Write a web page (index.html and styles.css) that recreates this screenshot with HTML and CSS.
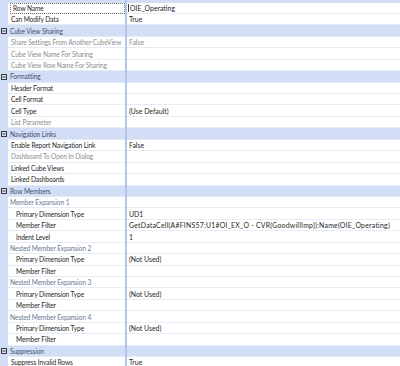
FILE: index.html
```html
<!DOCTYPE html>
<html>
<head>
<meta charset="utf-8">
<link rel="stylesheet" href="styles.css">
</head>
<body>
<div class="grid">
  <div class="topstrip"><div class="gut"></div><div class="band"></div><div class="div"></div><div class="band"></div></div>

  <div class="row"><div class="gut"></div><div class="name l1 focus">Row Name</div><div class="div"></div><div class="val"><span class="caret"></span>OIE_Operating</div></div>
  <div class="row"><div class="gut"></div><div class="name l1">Can Modify Data</div><div class="div"></div><div class="val">True</div></div>

  <div class="row cat"><div class="gut"><svg class="exp" width="6" height="6" viewBox="0 0 6 6"><rect x="0.5" y="0.5" width="5" height="5" fill="none" stroke="#3c3c3c" stroke-width="1"/><line x1="1.5" y1="3" x2="4.5" y2="3" stroke="#3c3c3c" stroke-width="1"/></svg></div><div class="name">Cube View Sharing</div><div class="div"></div><div class="val"></div></div>
  <div class="row"><div class="gut"></div><div class="name l1 dis">Share Settings From Another CubeView</div><div class="div"></div><div class="val dis">False</div></div>
  <div class="row"><div class="gut"></div><div class="name l1 dis">Cube View Name For Sharing</div><div class="div"></div><div class="val"></div></div>
  <div class="row"><div class="gut"></div><div class="name l1 dis">Cube View Row Name For Sharing</div><div class="div"></div><div class="val"></div></div>

  <div class="row cat"><div class="gut"><svg class="exp" width="6" height="6" viewBox="0 0 6 6"><rect x="0.5" y="0.5" width="5" height="5" fill="none" stroke="#3c3c3c" stroke-width="1"/><line x1="1.5" y1="3" x2="4.5" y2="3" stroke="#3c3c3c" stroke-width="1"/></svg></div><div class="name">Formatting</div><div class="div"></div><div class="val"></div></div>
  <div class="row"><div class="gut"></div><div class="name l1">Header Format</div><div class="div"></div><div class="val"></div></div>
  <div class="row"><div class="gut"></div><div class="name l1">Cell Format</div><div class="div"></div><div class="val"></div></div>
  <div class="row"><div class="gut"></div><div class="name l1">Cell Type</div><div class="div"></div><div class="val">(Use Default)</div></div>
  <div class="row"><div class="gut"></div><div class="name l1 dis">List Parameter</div><div class="div"></div><div class="val"></div></div>

  <div class="row cat"><div class="gut"><svg class="exp" width="6" height="6" viewBox="0 0 6 6"><rect x="0.5" y="0.5" width="5" height="5" fill="none" stroke="#3c3c3c" stroke-width="1"/><line x1="1.5" y1="3" x2="4.5" y2="3" stroke="#3c3c3c" stroke-width="1"/></svg></div><div class="name">Navigation Links</div><div class="div"></div><div class="val"></div></div>
  <div class="row"><div class="gut"></div><div class="name l1">Enable Report Navigation Link</div><div class="div"></div><div class="val">False</div></div>
  <div class="row"><div class="gut"></div><div class="name l1 dis">Dashboard To Open In Dialog</div><div class="div"></div><div class="val"></div></div>
  <div class="row"><div class="gut"></div><div class="name l1">Linked Cube Views</div><div class="div"></div><div class="val"></div></div>
  <div class="row"><div class="gut"></div><div class="name l1">Linked Dashboards</div><div class="div"></div><div class="val"></div></div>

  <div class="row cat"><div class="gut"><svg class="exp" width="6" height="6" viewBox="0 0 6 6"><rect x="0.5" y="0.5" width="5" height="5" fill="none" stroke="#3c3c3c" stroke-width="1"/><line x1="1.5" y1="3" x2="4.5" y2="3" stroke="#3c3c3c" stroke-width="1"/></svg></div><div class="name">Row Members</div><div class="div"></div><div class="val"></div></div>
  <div class="row"><div class="gut"></div><div class="name sub">Member Expansion 1</div><div class="div"></div><div class="val"></div></div>
  <div class="row"><div class="gut"></div><div class="name l2">Primary Dimension Type</div><div class="div"></div><div class="val">UD1</div></div>
  <div class="row"><div class="gut"></div><div class="name l2">Member Filter</div><div class="div"></div><div class="val long">GetDataCell(A#FINS57:U1#OI_EX_O - CVR(GoodwillImp)):Name(OIE_Operating)</div></div>
  <div class="row"><div class="gut"></div><div class="name l2">Indent Level</div><div class="div"></div><div class="val">1</div></div>
  <div class="row"><div class="gut"></div><div class="name sub">Nested Member Expansion 2</div><div class="div"></div><div class="val"></div></div>
  <div class="row"><div class="gut"></div><div class="name l2">Primary Dimension Type</div><div class="div"></div><div class="val">(Not Used)</div></div>
  <div class="row"><div class="gut"></div><div class="name l2">Member Filter</div><div class="div"></div><div class="val"></div></div>
  <div class="row"><div class="gut"></div><div class="name sub">Nested Member Expansion 3</div><div class="div"></div><div class="val"></div></div>
  <div class="row"><div class="gut"></div><div class="name l2">Primary Dimension Type</div><div class="div"></div><div class="val">(Not Used)</div></div>
  <div class="row"><div class="gut"></div><div class="name l2">Member Filter</div><div class="div"></div><div class="val"></div></div>
  <div class="row"><div class="gut"></div><div class="name sub">Nested Member Expansion 4</div><div class="div"></div><div class="val"></div></div>
  <div class="row"><div class="gut"></div><div class="name l2">Primary Dimension Type</div><div class="div"></div><div class="val">(Not Used)</div></div>
  <div class="row"><div class="gut"></div><div class="name l2">Member Filter</div><div class="div"></div><div class="val"></div></div>

  <div class="row cat"><div class="gut"><svg class="exp" width="6" height="6" viewBox="0 0 6 6"><rect x="0.5" y="0.5" width="5" height="5" fill="none" stroke="#3c3c3c" stroke-width="1"/><line x1="1.5" y1="3" x2="4.5" y2="3" stroke="#3c3c3c" stroke-width="1"/></svg></div><div class="name">Suppression</div><div class="div"></div><div class="val"></div></div>
  <div class="row"><div class="gut"></div><div class="name l1">Suppress Invalid Rows</div><div class="div"></div><div class="val">True</div></div>
</div>
</body>
</html>
```

FILE: styles.css
```css
html, body {
  margin: 0;
  padding: 0;
  background: #ffffff;
}
body {
  width: 400px;
  height: 366px;
  overflow: hidden;
  font-family: Lato, "Noto Sans", sans-serif;
  font-size: 6.9px;
  color: #1f1f1f;
}
.grid {
  display: flex;
  flex-direction: column;
}
.topstrip {
  display: grid;
  grid-template-columns: 8px 117px 2px 1fr;
  height: 2.55px;
}
.band {
  background: #d2def5;
}
.row {
  display: grid;
  grid-template-columns: 8px 117px 2px 1fr;
  height: 11.45px;
  flex: none;
}
.gut {
  background: #d2def5;
  display: flex;
  align-items: center;
  justify-content: center;
}
.div {
  background: #b3c6ea;
}
.name, .val {
  display: flex;
  align-items: center;
  box-sizing: border-box;
  border-bottom: 1px solid #e6ecf7;
  white-space: nowrap;
  position: relative;
}
.name {
  font-size: 6.6px;
  letter-spacing: -0.1px;
}
.name.l1 { padding-left: 3px; }
.name.l2 { padding-left: 8px; }
.name.sub { padding-left: 2px; color: #6b7794; }
.val { padding-left: 2px; }
.val.long { letter-spacing: 0.24px; }
.dis { color: #8e8e8e; }
.cat .name, .cat .val {
  background: #d2def5;
  border-bottom-color: #e2e9f7;
}
.cat .name {
  padding-left: 2px;
  color: #3f4e6e;
}
.exp {
  display: block;
}
.focus {
  outline: 1px dotted #707070;
  outline-offset: -1px;
  margin-left: 2px;
  padding-left: 1px;
}
.caret {
  display: inline-block;
  width: 1px;
  height: 8px;
  background: #444;
  margin-right: 1px;
  margin-left: -1px;
}
```
